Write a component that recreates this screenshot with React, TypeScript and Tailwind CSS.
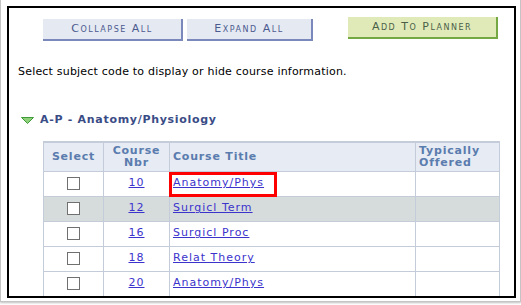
import React from "react";

const rows = [
  { nbr: "10", title: "Anatomy/Phys", marked: true },
  { nbr: "12", title: "Surgicl Term", shaded: true },
  { nbr: "16", title: "Surgicl Proc" },
  { nbr: "18", title: "Relat Theory" },
  { nbr: "20", title: "Anatomy/Phys" },
];

const font = { fontFamily: '"DejaVu Sans", Verdana, sans-serif' };

export default function App() {
  return (
    <div className="w-[521px] h-[305px] bg-white overflow-hidden" style={font}>
      <div className="w-[521px] h-[302px] border-x border-b border-[#c4c4c4] shadow-[0_1px_2px_rgba(0,0,0,0.25)] pt-[6px] pl-[6px]">
        <div className="w-[509px] h-[292px] border-2 border-black overflow-hidden">
          {/* buttons */}
          <div className="flex items-start pt-[9px] pl-[34px]">
            <button className="mt-[2px] w-[140px] h-[22px] bg-[#e4e9f2] border-r-2 border-b-2 border-[#7a88bb] text-[11px] text-[#4b5a8e] tracking-[1.5px] [font-variant:small-caps]">
              Collapse All
            </button>
            <button className="mt-[2px] ml-[4px] w-[126px] h-[22px] bg-[#e4e9f2] border-r-2 border-b-2 border-[#7a88bb] text-[11px] text-[#4b5a8e] tracking-[1.5px] [font-variant:small-caps]">
              Expand All
            </button>
            <button className="ml-[35px] w-[150px] h-[22px] bg-[#dfeab8] border-r-2 border-b-2 border-[#74a843] text-[11px] text-[#4a5e48] tracking-[1.5px] [font-variant:small-caps]">
              Add To Planner
            </button>
          </div>

          <p className="mt-[24px] pl-[9px] text-[11px] leading-[14px] text-black tracking-[0.2px]">
            Select subject code to display or hide course information.
          </p>

          {/* section header */}
          <div className="mt-[34px] pl-[12px] flex items-center h-[14px]">
            <svg width="13" height="7" viewBox="0 0 13 7">
              <polygon points="0.5,0.5 12.5,0.5 6.5,6.5" fill="#8fd07a" stroke="#3f9a3a" strokeWidth="1" />
            </svg>
            <span className="ml-[6px] text-[11px] font-bold text-[#3a4c86] tracking-[0.7px]">
              A-P - Anatomy/Physiology
            </span>
          </div>

          {/* course table */}
          <table className="mt-[14px] ml-[34px] w-[456px] border-collapse table-fixed text-[11px]">
            <colgroup>
              <col className="w-[60px]" />
              <col className="w-[66px]" />
              <col className="w-[246px]" />
              <col className="w-[84px]" />
            </colgroup>
            <thead>
              <tr className="h-[29px] bg-[#e7ebf3] text-[#5a7cae] font-bold leading-[12px] tracking-[0.8px]">
                <th className="border border-[#c4cbd9] border-t-2 font-bold text-center">Select</th>
                <th className="border border-[#c4cbd9] border-t-2 font-bold text-center">Course<br />Nbr</th>
                <th className="border border-[#c4cbd9] border-t-2 font-bold text-left pl-[3px]">Course Title</th>
                <th className="border border-[#c4cbd9] border-t-2 font-bold text-left pl-[3px]">Typically<br />Offered</th>
              </tr>
            </thead>
            <tbody>
              {rows.map((r) => (
                <tr key={r.nbr + r.title} className={`h-[25px] ${r.shaded ? "bg-[#d6dcdc]" : "bg-white"}`}>
                  <td className="border border-[#c4cbd9] text-center">
                    <span className="inline-block align-middle w-[13px] h-[13px] border border-[#707070] bg-white" />
                  </td>
                  <td className="border border-[#c4cbd9] text-center">
                    <a className="text-[#3b33cc] underline tracking-[1px]">{r.nbr}</a>
                  </td>
                  <td className="border border-[#c4cbd9] pl-[3px] relative">
                    <a className="text-[#3b33cc] underline tracking-[1px]">{r.title}</a>
                    {r.marked && (
                      <span className="absolute left-[-1px] top-0 w-[108px] h-[25px] border-[3px] border-[#ff0000]" />
                    )}
                  </td>
                  <td className="border border-[#c4cbd9]" />
                </tr>
              ))}
            </tbody>
          </table>
        </div>
      </div>
    </div>
  );
}
